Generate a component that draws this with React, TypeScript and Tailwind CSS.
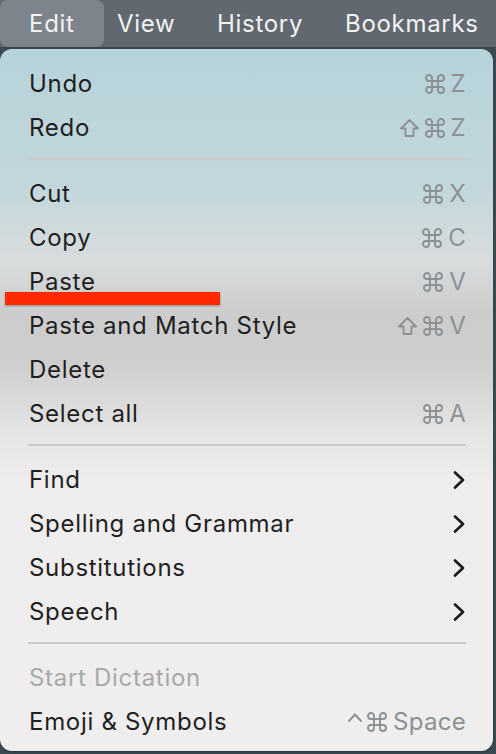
type Item =
  | { kind: 'item'; label: string; shortcut?: string[]; submenu?: boolean; disabled?: boolean }
  | { kind: 'sep' };

const items: Item[] = [
  { kind: 'item', label: 'Undo', shortcut: ['cmd', 'Z'] },
  { kind: 'item', label: 'Redo', shortcut: ['shift', 'cmd', 'Z'] },
  { kind: 'sep' },
  { kind: 'item', label: 'Cut', shortcut: ['cmd', 'X'] },
  { kind: 'item', label: 'Copy', shortcut: ['cmd', 'C'] },
  { kind: 'item', label: 'Paste', shortcut: ['cmd', 'V'] },
  { kind: 'item', label: 'Paste and Match Style', shortcut: ['shift', 'cmd', 'V'] },
  { kind: 'item', label: 'Delete' },
  { kind: 'item', label: 'Select all', shortcut: ['cmd', 'A'] },
  { kind: 'sep' },
  { kind: 'item', label: 'Find', submenu: true },
  { kind: 'item', label: 'Spelling and Grammar', submenu: true },
  { kind: 'item', label: 'Substitutions', submenu: true },
  { kind: 'item', label: 'Speech', submenu: true },
  { kind: 'sep' },
  { kind: 'item', label: 'Start Dictation', disabled: true },
  { kind: 'item', label: 'Emoji & Symbols', shortcut: ['ctrl', 'cmd', 'Space'] },
];

const CmdIcon = () => (
  <svg width="20" height="20" viewBox="0 0 20 20" fill="none" stroke="currentColor" strokeWidth="1.9">
    <path d="M7 4V16M13 4V16M4 7H16M4 13H16" />
    <path d="M7 4A3 3 0 1 0 4 7M13 4A3 3 0 1 1 16 7M7 16A3 3 0 1 1 4 13M13 16A3 3 0 1 0 16 13" />
  </svg>
);

const ShiftIcon = () => (
  <svg width="21" height="20" viewBox="0 0 21 20" fill="none" stroke="currentColor" strokeWidth="1.8" strokeLinejoin="round">
    <path d="M10.5 2L19 10.5H14.5V18H6.5V10.5H2Z" />
  </svg>
);

const CtrlIcon = () => (
  <svg width="16" height="20" viewBox="0 0 16 20" fill="none" stroke="currentColor" strokeWidth="1.9" strokeLinecap="round">
    <path d="M2 9L8 2.5L14 9" />
  </svg>
);

const Shortcut = ({ keys }: { keys: string[] }) => (
  <span className="flex items-center text-[#8b9195]">
    {keys.map((k, i) => {
      if (k === 'cmd')
        return (
          <span key={i} className="mr-[6px]">
            <CmdIcon />
          </span>
        );
      if (k === 'shift')
        return (
          <span key={i} className="mr-[5px]">
            <ShiftIcon />
          </span>
        );
      if (k === 'ctrl')
        return (
          <span key={i} className="mr-[4px]">
            <CtrlIcon />
          </span>
        );
      return (
        <span key={i} className="tracking-[0.3px]">
          {k}
        </span>
      );
    })}
  </span>
);

const Chevron = () => (
  <svg width="14" height="20" viewBox="0 0 14 20" fill="none" stroke="#1c1c1c" strokeWidth="2.7" strokeLinecap="round" strokeLinejoin="round">
    <path d="M3 2.5L11 10L3 17.5" />
  </svg>
);

export default function App() {
  return (
    <div className="h-[754px] w-[496px] overflow-hidden bg-[#3a4a50] font-['Inter','DejaVu_Sans',sans-serif] tracking-[0.7px]">
      <div className="flex h-[48px] items-stretch border-b border-[#3b4046] bg-[#62686f] text-[24px] text-[#f2f3f4]">
        <div className="flex w-[104px] items-center rounded-lg bg-[#7e848b] pl-[29px]">Edit</div>
        <div className="flex w-[113px] items-center pl-[13px]">View</div>
        <div className="flex w-[128px] items-center">History</div>
        <div className="flex items-center">Bookmarks</div>
      </div>
      <div className="relative mt-px h-[702px] w-[493px] rounded-[12px] bg-[linear-gradient(180deg,#b6d3da_0%,#c3d7dc_20%,#d8dcdd_30%,#cccccc_38%,#cfcfcf_45%,#e6e5e6_55%,#efedee_62%,#efedee_100%)] px-[28px] pb-[6px] pt-[13px] text-[24px] text-[#1f1f1f] shadow-[0_1px_2px_rgba(0,0,0,0.3)]">
        {items.map((item, i) =>
          item.kind === 'sep' ? (
            <div key={i} className="h-[22px] pt-[8px]">
              <div className="h-[2px] w-[438px] bg-[#c6c8c9]" />
            </div>
          ) : (
            <div
              key={i}
              className={`flex h-[44px] w-[438px] items-center justify-between ${item.disabled ? 'text-[#a9a9aa]' : ''}`}
            >
              <span className="pl-px">{item.label}</span>
              {item.shortcut && <Shortcut keys={item.shortcut} />}
              {item.submenu && <Chevron />}
            </div>
          ),
        )}
        <div className="absolute left-[5px] top-[243px] h-[13px] w-[215px] bg-[#ff2a00] shadow-[0_1px_2px_rgba(0,0,0,0.35)]" />
      </div>
    </div>
  );
}
